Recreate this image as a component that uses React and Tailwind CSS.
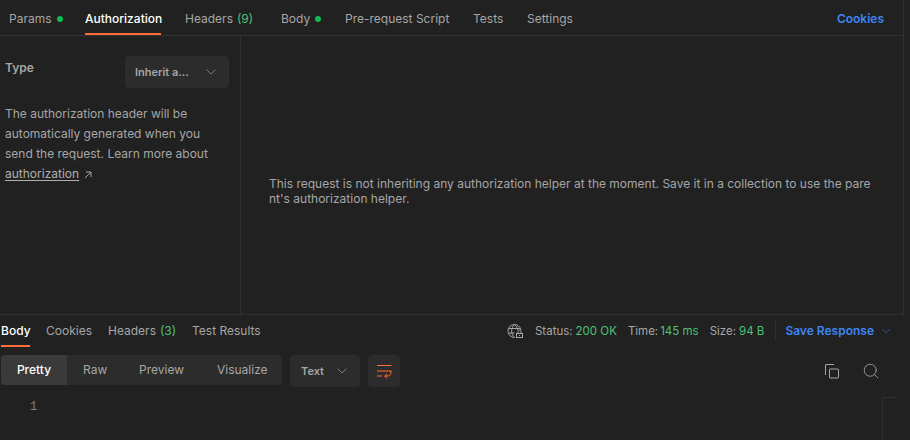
import React from "react";
import { ChevronDown, Search } from "lucide-react";

const font = { fontFamily: "Inter, 'Noto Sans', sans-serif" };

function Dot() {
  return <span className="ml-[5px] inline-block h-[6px] w-[6px] rounded-full bg-[#0cbb52]" />;
}

function TopTab({ children, active, className = "" }) {
  return (
    <div className={`relative flex h-full items-center ${active ? "font-medium text-[#ffffff]" : "text-[#a6a6a6]"} ${className}`}>
      {children}
      {active && <div className="absolute bottom-0 left-0 right-0 h-[2px] bg-[#ff6c37]" />}
    </div>
  );
}

function Wrap() {
  return (
    <svg width="16" height="16" viewBox="0 0 16 16" fill="none" stroke="#ff6c37" strokeWidth="1">
      <path d="M1 2.500h14.500M1 8h14.500M1 13h5" />
      <path d="M15 8c0 3.500-1 5-3 5H8.500M11 10.800 8.700 13l2.300 2.500" />
    </svg>
  );
}

function Globe() {
  return (
    <svg width="17" height="16" viewBox="0 0 17 16" fill="none" stroke="#a6a6a6" strokeWidth="1">
      <path d="M7.500 14.500A6.500 6.500 0 1 1 13.900 7" />
      <path d="M7.500 1.500c-3.800 3.500-3.800 9.500 0 13M7.500 1.500c2 1.500 3 3.500 3 5.500" />
      <path d="M1.800 5.500h11M1.500 10h6" />
      <path d="M11 10.500V8.500a1.500 1.500 0 0 1 3 0v2" />
      <rect x="9.500" y="10.500" width="6" height="4" fill="#212121" />
      <rect x="12" y="12" width="1" height="1" fill="#a6a6a6" stroke="none" />
    </svg>
  );
}

function Copy() {
  return (
    <svg width="16" height="16" viewBox="0 0 16 16" fill="none" stroke="#a6a6a6" strokeWidth="1">
      <rect x="6.500" y="6" width="9" height="9" rx="0.500" />
      <path d="M2.500 12V2a.5.5 0 0 1 .5-.5H11" />
    </svg>
  );
}

function External() {
  return (
    <svg width="8" height="8" viewBox="0 0 8 8" fill="none" stroke="#a6a6a6" strokeWidth="1" className="ml-[5px] inline-block">
      <path d="M1 7 7 1M2 1h5v5" />
    </svg>
  );
}

export default function App() {
  return (
    <div style={font} className="flex h-[440px] w-[910px] flex-col overflow-hidden bg-[#212121] text-[12px] leading-[20px] text-[#a6a6a6]">
      <div className="flex h-[315px] w-[904px] flex-col border-b border-r border-[#303030]">
        <div className="flex h-[36px] shrink-0 items-stretch border-b border-[#303030] pl-[9px] pr-[19px]">
          <div className="flex items-stretch text-[12px]">
            <TopTab className="w-[76px] pt-[3px]">Params<Dot /></TopTab>
            <TopTab active className="w-[76px] pt-[3px]">Authorization</TopTab>
            <TopTab className="ml-[24px] w-[96px] pt-[3px]">Headers<span className="ml-1 text-[#4cc27a]">(9)</span></TopTab>
            <TopTab className="w-[64px] pt-[3px]">Body<Dot /></TopTab>
            <TopTab className="w-[121px] pt-[3px]">Pre-request Script</TopTab>
            <TopTab className="ml-[7px] w-[54px] pt-[3px]">Tests</TopTab>
            <TopTab className="pt-[3px]">Settings</TopTab>
          </div>
          <div className="ml-auto flex items-center pt-[3px] font-semibold text-[#3d86f2]">Cookies</div>
        </div>
        <div className="flex min-h-0 flex-1">
          <div className="w-[241px] shrink-0 border-r border-[#303030] pl-[5px] pr-[11px] pt-[20px]">
            <div className="flex items-start justify-between">
              <span className="mt-[2px] font-semibold leading-[20px] text-[#a6a6a6]">Type</span>
              <div className="flex h-[32px] w-[104px] items-center justify-between rounded-[4px] bg-[#2c2c2c] pl-[10px] pr-[10px] text-[11px] font-semibold text-[#a6a6a6]">
                <span>Inherit a...</span>
                <ChevronDown size={16} strokeWidth={1} />
              </div>
            </div>
            <p className="mt-[16px] text-[12px] leading-[20px] text-[#a6a6a6]">
              The authorization header will be automatically generated when you send the request. Learn more about{" "}
              <span className="text-[#b0b0b0] underline underline-offset-2">authorization</span>
              <External />
            </p>
          </div>
          <div className="flex flex-1 items-center pl-[28px] pr-[28px]">
            <p className="mt-[31px] break-all text-[12px] leading-[15px] text-[#a6a6a6]">
              This request is not inheriting any authorization helper at the moment. Save it in a collection to use the parent's authorization helper.
            </p>
          </div>
        </div>
      </div>
      <div className="flex h-[32px] shrink-0 items-stretch pl-[1px] pr-[17px]">
        <TopTab active className="w-[29px]">Body</TopTab>
        <TopTab className="ml-[16px] w-[46px]">Cookies</TopTab>
        <TopTab className="ml-[16px] w-[69px]">Headers<span className="ml-1 text-[#4cc27a]">(3)</span></TopTab>
        <TopTab className="ml-[15px]">Test Results</TopTab>
        <div className="ml-auto flex items-center text-[11.5px]">
          <Globe />
          <span className="ml-[11px]">Status:</span><span className="ml-[3px] text-[#4cc27a]">200 OK</span>
          <span className="ml-[11px]">Time:</span><span className="ml-[2px] text-[#4cc27a]">145 ms</span>
          <span className="ml-[11px]">Size:</span><span className="ml-[3px] text-[#4cc27a]">94 B</span>
          <div className="ml-[11px] h-[20px] w-px bg-[#303030]" />
          <span className="ml-[9px] text-[12px] font-semibold text-[#3d86f2]">Save Response</span>
          <ChevronDown size={14} strokeWidth={1} className="ml-[5px] text-[#3d86f2]" />
        </div>
      </div>
      <div className="mt-[8px] flex h-[32px] shrink-0 items-start pl-[1px] pr-[30px]">
        <div className="flex h-[30px] w-[281px] overflow-hidden rounded-[4px] bg-[#2c2c2c]">
          <div className="flex w-[66px] items-center justify-center bg-[#3a3a3a] font-medium text-[#ffffff]">Pretty</div>
          <div className="ml-[16px] flex w-[25px] items-center">Raw</div>
          <div className="ml-[31px] flex w-[47px] items-center">Preview</div>
          <div className="ml-[31px] flex items-center">Visualize</div>
        </div>
        <div className="ml-[8px] flex h-[32px] w-[70px] items-center justify-between rounded-[4px] bg-[#2c2c2c] pl-[11px] pr-[10px] text-[11px] font-semibold text-[#a6a6a6]">
          <span>Text</span>
          <ChevronDown size={16} strokeWidth={1} />
        </div>
        <div className="ml-[8px] flex h-[32px] w-[32px] items-center justify-center rounded-[4px] bg-[#2c2c2c]"><Wrap /></div>
        <div className="ml-auto flex h-[32px] items-center gap-[23px] text-[#a6a6a6]">
          <Copy />
          <Search size={18} strokeWidth={1.100} />
        </div>
      </div>
      <div className="relative min-h-0 flex-1">
        <span className="absolute left-[30px] top-[10px] font-['Liberation_Mono'] text-[12px] text-[#808080]">1</span>
        <div className="absolute left-[882px] top-[10px] h-[50px] w-[14px] border-l border-t border-[#303030]" />
      </div>
    </div>
  );
}
